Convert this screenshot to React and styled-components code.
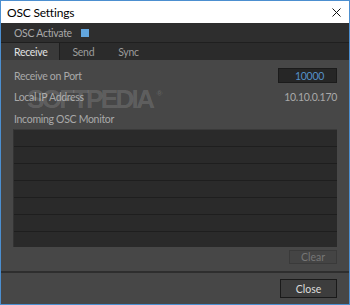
import styled, { createGlobalStyle } from "styled-components";

const GlobalStyle = createGlobalStyle`
  html, body { margin: 0; padding: 0; background: #474747; }
  * { box-sizing: border-box; }
`;

const Window = styled.div`
  position: relative;
  width: 350px;
  height: 305px;
  border: 1px solid #4c8fd0;
  display: flex;
  flex-direction: column;
  font-family: Lato, "Liberation Sans", sans-serif;
  font-size: 10.5px;
  letter-spacing: -0.3px;
  overflow: hidden;
`;

const TitleBar = styled.div`
  height: 22px;
  background: #fff;
  display: flex;
  align-items: center;
  justify-content: space-between;
  padding: 0 8px 0 6px;
  color: #000;
  font-size: 12px;
  letter-spacing: -0.2px;
`;

const CloseX = styled.svg`
  width: 9px;
  height: 9px;
`;

const ActivateRow = styled.div`
  height: 20px;
  background: #2e2e2e;
  border-bottom: 1px solid #1f1f1f;
  display: flex;
  align-items: center;
  gap: 9px;
  padding-left: 13px;
  color: #a9a9a9;
`;

const Check = styled.span`
  width: 8px;
  height: 8px;
  background: #62a6de;
`;

const TabBar = styled.div`
  height: 17px;
  background: #2b2b2b;
  display: flex;
`;

const Tab = styled.div`
  padding: 0 12px 0 ${(p) => (p.$first ? 13 : 12)}px;
  display: flex;
  align-items: center;
  background: ${(p) => (p.$active ? "#3a3a3a" : "transparent")};
  border-right: ${(p) => (p.$active ? "1px solid #1e1e1e" : "none")};
  color: ${(p) => (p.$active ? "#e2e2e2" : "#9c9c9c")};
`;

const Panel = styled.div`
  height: 211px;
  background: #474747;
  padding: 8px 12px 0 12px;
  display: flex;
  flex-direction: column;
  color: #a9a9a9;
`;

const Row = styled.div`
  height: ${(p) => p.$h}px;
  margin-top: ${(p) => p.$mt || 0}px;
  display: flex;
  align-items: center;
  justify-content: space-between;
  padding-left: 1px;
`;

const PortInput = styled.div`
  width: 59px;
  height: 15px;
  background: #262626;
  border: 1px solid #1b1b1b;
  color: #5590c6;
  display: flex;
  align-items: center;
  justify-content: center;
  padding-left: 4px;
`;

const Value = styled.span`
  color: #a9a9a9;
`;

const Monitor = styled.div`
  height: 118px;
  background: #2a2a2a;
  border-top: 1px solid #3a3a3a;
  border-left: 1px solid #333;
  display: flex;
  flex-direction: column;
`;

const MonitorLine = styled.div`
  height: 17px;
  border-bottom: 1px solid #1e1e1e;
`;

const ButtonRow = styled.div`
  display: flex;
  justify-content: flex-end;
  margin-top: 3px;
`;

const Button = styled.button`
  width: ${(p) => p.$w}px;
  height: ${(p) => p.$h}px;
  font-family: inherit;
  font-size: 10.5px;
  padding: 0;
  background: ${(p) => (p.disabled ? "#444" : "#3d3d3d")};
  border: 1px solid ${(p) => (p.disabled ? "#3a3a3a" : "#1a1a1a")};
  color: ${(p) => (p.disabled ? "#767676" : "#dcdcdc")};
`;

const Footer = styled.div`
  flex: 1;
  background: #474747;
  border-top: 2px solid #2e2e2e;
  display: flex;
  justify-content: flex-end;
  padding: 6px 12px 0 0;
`;

const Watermark = styled.div`
  position: absolute;
  left: 26px;
  top: 83px;
  font-family: "Liberation Sans", Arial, sans-serif;
  font-weight: bold;
  font-size: 26px;
  letter-spacing: -2.6px;
  color: rgba(255, 255, 255, 0.15);
  pointer-events: none;
  sup {
    font-size: 8px;
    letter-spacing: 0;
    margin-left: 4px;
    vertical-align: 12px;
  }
`;

export default function App() {
  return (
    <>
      <GlobalStyle />
      <Window>
        <TitleBar>
          <span>OSC Settings</span>
          <CloseX viewBox="0 0 9 9">
            <path d="M0.5 0.5 L8.5 8.5 M8.5 0.5 L0.5 8.5" stroke="#111" strokeWidth="1" />
          </CloseX>
        </TitleBar>
        <ActivateRow>
          <span>OSC Activate</span>
          <Check />
        </ActivateRow>
        <TabBar>
          <Tab $active $first>Receive</Tab>
          <Tab>Send</Tab>
          <Tab>Sync</Tab>
        </TabBar>
        <Panel>
          <Row $h={15}>
            <span>Receive on Port</span>
            <PortInput>10000</PortInput>
          </Row>
          <Row $h={20} $mt={4}>
            <span>Local IP Address</span>
            <Value>10.10.0.170</Value>
          </Row>
          <Row $h={20} $mt={2}>
            <span>Incoming OSC Monitor</span>
          </Row>
          <Monitor>
            {[0, 1, 2, 3, 4, 5].map((i) => (
              <MonitorLine key={i} />
            ))}
          </Monitor>
          <ButtonRow>
            <Button disabled $w={48} $h={14}>Clear</Button>
          </ButtonRow>
        </Panel>
        <Footer>
          <Button $w={57} $h={19}>Close</Button>
        </Footer>
        <Watermark>
          SOFTPEDIA<sup>®</sup>
        </Watermark>
      </Window>
    </>
  );
}
